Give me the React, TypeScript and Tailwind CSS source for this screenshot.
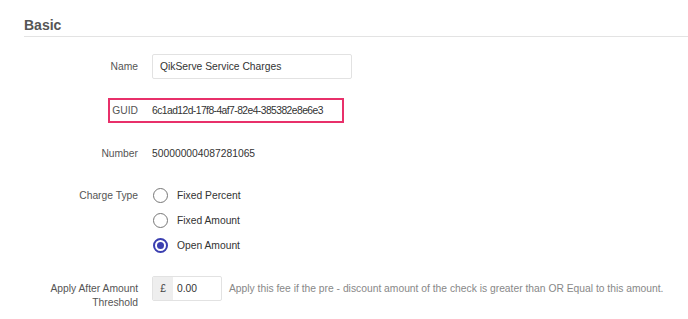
import React from 'react';

const Row: React.FC<{ label: React.ReactNode; children: React.ReactNode; top?: boolean }> = ({ label, children, top }) => (
  <div className={`flex ${top ? 'items-start' : 'items-center'}`}>
    <div className={`w-[114px] shrink-0 text-right text-[#555] ${top ? 'pt-[6px] leading-[14px]' : ''}`}>{label}</div>
    <div className="ml-[14px] flex-1">{children}</div>
  </div>
);

const Radio: React.FC<{ label: string; checked?: boolean }> = ({ label, checked }) => (
  <div className="flex h-[25px] items-center">
    {checked ? (
      <span className="flex h-[15px] w-[15px] items-center justify-center rounded-full border-2 border-[#3b3fb0] ml-[1px]">
        <span className="h-[7px] w-[7px] rounded-full bg-[#3b3fb0]" />
      </span>
    ) : (
      <span className="h-[15px] w-[15px] rounded-full border-[1.5px] border-[#777] ml-[1px]" />
    )}
    <span className="ml-[9px] text-[#333]">{label}</span>
  </div>
);

const App: React.FC = () => {
  return (
    <div className="h-[319px] w-[688px] overflow-hidden bg-white text-[10.3px] text-[#333]" style={{ fontFamily: '"Liberation Sans", Arial, sans-serif' }}>
      {/* Section header */}
      <div className="ml-[24px] border-b border-[#e3e3e3] pb-[2px] pt-[16px]">
        <h2 className="text-[14px] font-bold leading-[18px] text-[#555]">Basic</h2>
      </div>

      <div className="flex flex-col pl-[24px] pt-[17px]">
        <Row label="Name">
          <div className="flex h-[25px] w-[200px] items-center rounded-[2px] border border-[#e2e2e2] px-[7px] text-[#333]">
            QikServe Service Charges
          </div>
        </Row>

        <div className="relative mt-[19px]">
          <Row label="GUID">
            <div className="flex h-[25px] items-center tracking-[-0.55px]">6c1ad12d-17f8-4af7-82e4-385382e8e6e3</div>
          </Row>
          {/* highlight annotation */}
          <div className="pointer-events-none absolute left-[84px] top-0 h-[25px] w-[236px] border-2 border-[#e8306a]" />
        </div>

        <div className="mt-[18px]">
          <Row label="Number">
            <div className="flex h-[25px] items-center">500000004087281065</div>
          </Row>
        </div>

        <div className="mt-[17px] flex items-start">
          <div className="flex h-[25px] w-[114px] shrink-0 items-center justify-end text-[#555]">Charge Type</div>
          <div className="ml-[14px] flex flex-col">
            <Radio label="Fixed Percent" />
            <Radio label="Fixed Amount" />
            <Radio label="Open Amount" checked />
          </div>
        </div>

        <div className="mt-[18px]">
          <Row
            top
            label={
              <>
                Apply After Amount
                <br />
                Threshold
              </>
            }
          >
            <div className="flex items-center">
              <div className="flex h-[25px] w-[70px] shrink-0 overflow-hidden rounded-[2px] border border-[#e2e2e2]">
                <span className="flex w-[20px] items-center justify-center bg-[#eeeeee] text-[#444]">£</span>
                <span className="flex items-center pl-[4px] text-[#333]">0.00</span>
              </div>
              <span className="ml-[7px] whitespace-nowrap text-[#888]">
                Apply this fee if the pre - discount amount of the check is greater than OR Equal to this amount.
              </span>
            </div>
          </Row>
        </div>
      </div>
    </div>
  );
};

export default App;
